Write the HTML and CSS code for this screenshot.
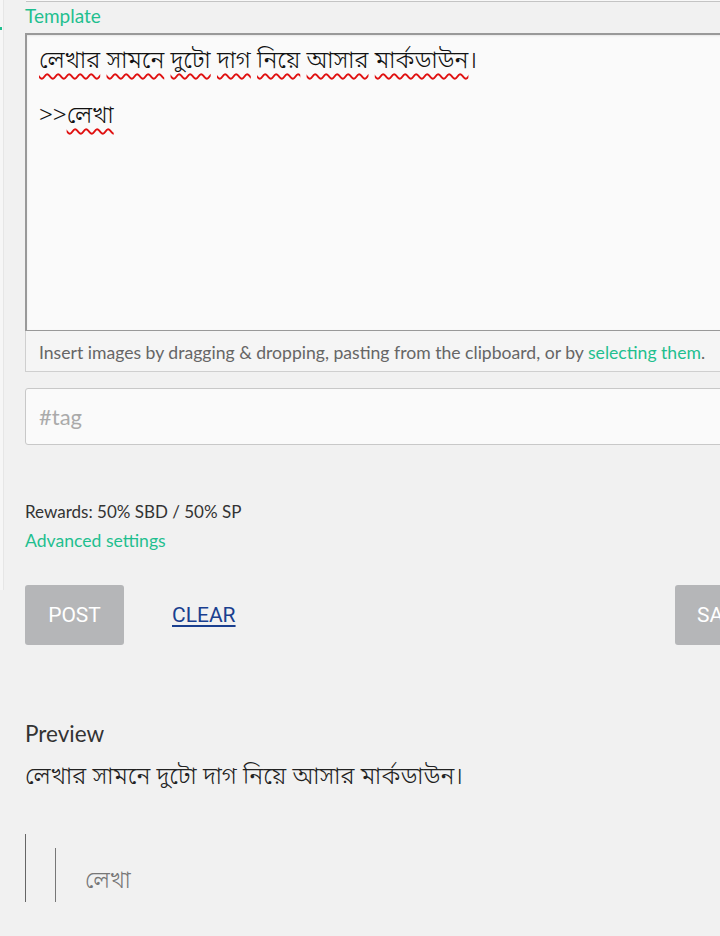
FILE: index.html
```html
<!DOCTYPE html>
<html lang="bn">
<head>
<meta charset="utf-8">
<title>Template</title>
<link rel="stylesheet" href="styles.css">
</head>
<body>
<div class="page">
  <div class="edge"><span class="edge-dot"></span></div>
  <main class="form">
    <div class="prev-field"></div>
    <label class="field-label">Template</label>
    <div class="editor">
      <div class="textarea">
        <p class="bn"><span class="spell">লেখার</span> <span class="spell">সামনে</span> <span class="spell">দুটো</span> <span class="spell">দাগ</span> <span class="spell">নিয়ে</span> <span class="spell">আসার</span> <span class="spell">মার্কডাউন</span>।</p>
        <p class="bn">&gt;&gt;<span class="spell">লেখা</span></p>
      </div>
      <div class="dropzone">Insert images by dragging &amp; dropping, pasting from the clipboard, or by <a class="green">selecting them</a>.</div>
    </div>
    <div class="tag-input">#tag</div>
    <div class="rewards">Rewards: 50% SBD / 50% SP</div>
    <a class="green adv">Advanced settings</a>
    <div class="actions">
      <button class="btn">POST</button>
      <a class="clear">CLEAR</a>
      <button class="btn save">SAVE</button>
    </div>
    <section class="preview">
      <h3 class="preview-title">Preview</h3>
      <p class="bn preview-text">লেখার সামনে দুটো দাগ নিয়ে আসার মার্কডাউন।</p>
      <blockquote class="quote outer">
        <blockquote class="quote inner">
          <p class="bn quote-text">লেখা</p>
        </blockquote>
      </blockquote>
    </section>
  </main>
</div>
</body>
</html>
```
FILE: styles.css
```css
* { box-sizing: border-box; }
html, body { margin: 0; padding: 0; }
body {
  background: #f1f1f1;
  font-family: "Lato", "Noto Sans", sans-serif;
  color: #333;
  overflow: hidden;
  width: 720px;
  height: 936px;
}
.page {
  display: flex;
  align-items: flex-start;
}
.edge {
  width: 4px;
  height: 590px;
  background: #f6f6f6;
  border-right: 1px solid #e6e6e6;
  flex: none;
  padding-top: 27px;
}
.edge-dot {
  display: block;
  width: 2px;
  height: 3px;
  background: #1fbf8f;
}
.form {
  margin-left: 21px;
  width: 749px;
  flex: none;
}
.prev-field {
  height: 2px;
  background: #f8f8f8;
  border-bottom: 1px solid #c4c4c4;
  margin-left: 1px;
}
.field-label {
  display: block;
  color: #1fbf8f;
  font-size: 19px;
  line-height: 22px;
  margin-top: 3px;
  height: 28px;
}
.green { color: #1fbf8f; text-decoration: none; }
.bn {
  font-family: "Noto Sans Bengali", "Lohit Bengali", "FreeSans", "Noto Sans", sans-serif;
  font-weight: 300;
  margin: 0;
}
.textarea {
  background: #fafafa;
  border: 1px solid #999;
  border-left-width: 2px;
  border-top-width: 2px;
  box-shadow: inset 0 1px 2px rgba(0,0,0,0.08);
  height: 298px;
  padding: 14px 12px;
  font-size: 24.2px;
  line-height: 27.5px;
  color: #111;
}
.textarea p + p { margin-top: 27.5px; }
.spell {
  text-decoration: underline wavy #e01010;
  text-decoration-thickness: 1.5px;
  text-underline-offset: 5px;
}
.dropzone {
  border: 1px solid #cfcfcf;
  border-top: none;
  background: #f5f5f5;
  height: 41px;
  padding: 11px 13px;
  font-size: 17.6px;
  line-height: 22px;
  color: #666;
  white-space: nowrap;
}
.tag-input {
  margin-top: 16px;
  height: 57px;
  border: 1px solid #c8c8c8;
  border-radius: 3px;
  background: #fafafa;
  padding: 15px 13px;
  font-size: 22px;
  line-height: 26px;
  color: #aaa;
}
.rewards {
  margin-top: 56px;
  font-size: 17px;
  line-height: 22px;
  color: #333;
}
.adv {
  display: block;
  margin-top: 7px;
  font-size: 17.6px;
  line-height: 22px;
}
.actions {
  display: flex;
  align-items: center;
  margin-top: 33px;
}
.btn {
  width: 99px;
  height: 60px;
  border: none;
  border-radius: 3px;
  background: #b5b6b8;
  color: #fff;
  font-family: "Roboto", sans-serif;
  font-size: 21px;
  padding: 0;
  text-align: center;
}
.clear {
  margin-left: 48px;
  font-family: "Roboto", sans-serif;
  font-size: 21px;
  color: #1a3f8f;
  text-decoration: underline;
  text-underline-offset: 3px;
}
.save {
  margin-left: auto;
  text-align: left;
  padding-left: 22px;
}
.preview { margin-top: 73px; }
.preview-title {
  margin: 0;
  font-weight: normal;
  font-size: 22.5px;
  line-height: 32px;
  color: #333;
}
.preview-text {
  margin-top: 11px;
  font-size: 24.2px;
  line-height: 34px;
  color: #222;
}
.quote {
  margin: 0;
  border-left: 1px solid #666;
  padding-left: 29px;
}
.quote.outer {
  margin-top: 39px;
  padding-top: 14px;
}
.quote.inner {
  border-left-color: #777;
  padding-top: 16px;
  padding-bottom: 2px;
}
.quote-text {
  font-size: 23.5px;
  line-height: 36px;
  color: #777;
}
```
